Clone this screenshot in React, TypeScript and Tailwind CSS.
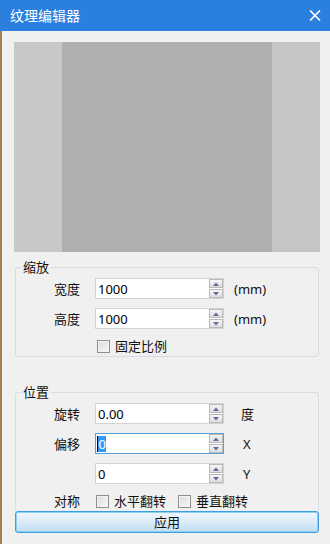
import React from "react";

const FONT = "font-['Noto_Sans','Noto_Sans_CJK_SC',sans-serif]";

function SpinBox({ value, focused = false }: { value: string; focused?: boolean }) {
  return (
    <div
      className={`flex h-[21px] w-[129px] items-center border bg-white ${
        focused ? "border-[#5a9fdc]" : "border-[#d3d3d3]"
      }`}
    >
      <div className="flex flex-1 items-center pl-[1px] text-[13px] leading-[16px] text-black">
        {focused ? (
          <>
            <span className="h-[16px] w-[1px] bg-black" />
            <span className="bg-[#3399ff] px-[0.5px] text-white">{value}</span>
          </>
        ) : (
          <span className="pl-[1px]">{value}</span>
        )}
      </div>
      {/* spin buttons */}
      <div className="flex h-[19px] w-[14px] flex-col gap-[1px]">
        <div className="flex flex-1 items-center justify-center border border-[#b9b9b9] bg-gradient-to-b from-[#f6f6f6] to-[#dedede]">
          <svg width="6" height="4" viewBox="0 0 6 4">
            <path d="M0 4 L3 0.5 L6 4 Z" fill="#5d6f96" />
          </svg>
        </div>
        <div className="flex flex-1 items-center justify-center border border-[#b9b9b9] bg-gradient-to-b from-[#f6f6f6] to-[#dedede]">
          <svg width="6" height="4" viewBox="0 0 6 4">
            <path d="M0 0 L3 3.5 L6 0 Z" fill="#5d6f96" />
          </svg>
        </div>
      </div>
    </div>
  );
}

function CheckBox({ label }: { label: string }) {
  return (
    <div className="flex items-center gap-[5px]">
      <span className="h-[13px] w-[13px] border border-[#8e8f8f] bg-gradient-to-br from-[#dcdcdc] to-[#f8f8f8] shadow-[inset_0_0_0_1px_#f4f4f4]" />
      <span className="text-[13px] leading-[16px] text-[#111]">{label}</span>
    </div>
  );
}

function Row({
  label,
  value,
  unit,
  unitGap,
  focused,
}: {
  label: string;
  value: string;
  unit: string;
  unitGap: string;
  focused?: boolean;
}) {
  return (
    <div className="flex h-[21px] items-center">
      <span className="w-[41px] text-[13px] leading-[16px] text-[#111]">{label}</span>
      <SpinBox value={value} focused={focused} />
      <span className={`${unitGap} text-[13px] leading-[16px] text-[#111]`}>{unit}</span>
    </div>
  );
}

export default function App() {
  return (
    <div className={`flex h-[544px] w-[330px] flex-col bg-[#f0f0f0] ${FONT}`}>
      {/* Title bar */}
      <div className="flex h-[31px] items-center justify-between bg-[#2b80df] pl-[10px] pr-[9px]">
        <span className="text-[14px] leading-[18px] text-white">纹理编辑器</span>
        <svg width="12" height="11" viewBox="0 0 12 11">
          <path d="M1 0.5 L11 10.5 M11 0.5 L1 10.5" stroke="white" strokeWidth="1.6" />
        </svg>
      </div>

      <div className="flex flex-1">
        <div className="w-[2px] bg-[#a2804c]" />
        <div className="flex flex-1 flex-col pl-[12px] pr-[10px] pt-[11px]">
          {/* Preview */}
          <div className="flex h-[210px]">
            <div className="w-[48px] bg-[#c8c8c8]" />
            <div className="flex-1 bg-[#afafaf]" />
            <div className="w-[48px] bg-[#c5c5c5]" />
          </div>

          {/* 缩放 */}
          <fieldset className="mx-[1px] mt-[7px] rounded-[3px] border border-[#d8dce0]">
            <legend className="ml-[5px] px-[2px] text-[13px] leading-[16px] text-[#111]">缩放</legend>
            <div className="flex flex-col gap-[9px] pb-[2px] pl-[38px] pt-[3px]">
              <Row label="宽度" value="1000" unit="(mm)" unitGap="ml-[10px]" />
              <Row label="高度" value="1000" unit="(mm)" unitGap="ml-[10px]" />
              <div className="flex h-[16px] items-center pl-[43px]">
                <CheckBox label="固定比例" />
              </div>
            </div>
          </fieldset>

          {/* 位置 */}
          <fieldset className="mx-[1px] mt-[27px] rounded-t-[3px] border border-b-0 border-[#d8dce0]">
            <legend className="ml-[5px] px-[2px] text-[13px] leading-[16px] text-[#111]">位置</legend>
            <div className="flex flex-col gap-[9px] pb-[2px] pl-[38px] pt-[3px]">
              <Row label="旋转" value="0.00" unit="度" unitGap="ml-[17px]" />
              <Row label="偏移" value="0" unit="X" unitGap="ml-[19px]" focused />
              <Row label="" value="0" unit="Y" unitGap="ml-[19px]" />
              <div className="flex h-[16px] items-center">
                <span className="w-[42px] text-[13px] leading-[16px] text-[#111]">对称</span>
                <div className="flex items-center gap-[12px]">
                  <CheckBox label="水平翻转" />
                  <CheckBox label="垂直翻转" />
                </div>
              </div>
            </div>
          </fieldset>

          {/* Apply */}
          <button className="mx-[1px] flex h-[22px] items-center justify-center rounded-[3px] border border-[#3c9fe2] bg-gradient-to-b from-[#eef6fc] via-[#dcecf8] to-[#c1dcef] text-[13px] leading-[16px] text-[#111] shadow-[inset_0_0_0_1px_#8fd0f5]">
            应用
          </button>
        </div>
      </div>
    </div>
  );
}
